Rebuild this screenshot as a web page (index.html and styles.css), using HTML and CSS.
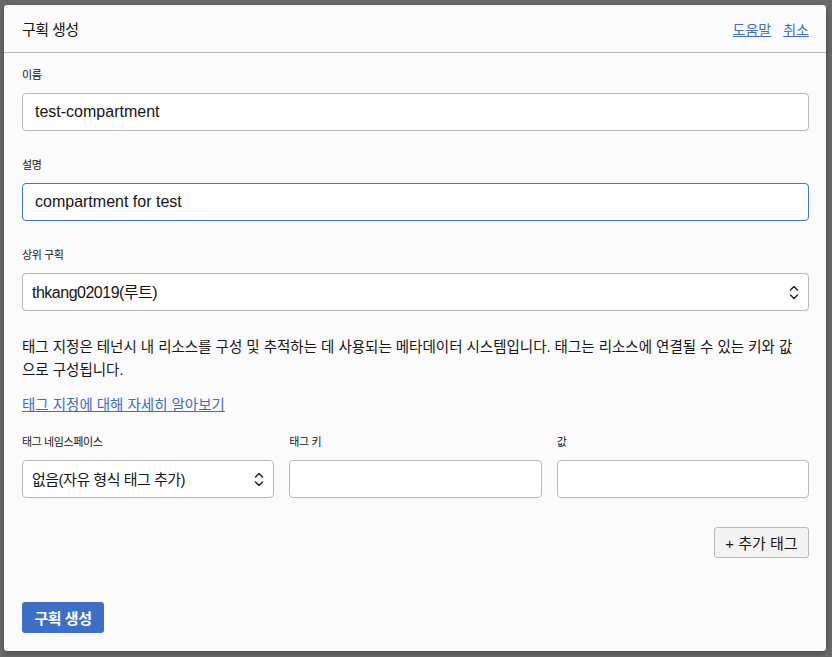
FILE: index.html
```html
<!DOCTYPE html>
<html lang="ko">
<head>
  <meta charset="UTF-8">
  <title>구획 생성</title>
  <link rel="stylesheet" href="styles.css">
</head>
<body>
  <div class="dialog">
    <div class="dialog-header">
      <h1>구획 생성</h1>
      <div class="header-links">
        <a href="#">도움말</a>
        <a href="#">취소</a>
      </div>
    </div>

    <div class="dialog-body">
      <div class="field">
        <label>이름</label>
        <input type="text" class="text-input" value="test-compartment">
      </div>

      <div class="field">
        <label>설명</label>
        <input type="text" class="text-input focused" value="compartment for test">
      </div>

      <div class="field">
        <label>상위 구획</label>
        <div class="select-wrap">
          <select class="text-input">
            <option>thkang02019(루트)</option>
          </select>
          <svg class="chevrons" width="10" height="17" viewBox="0 0 10 17"><path d="M1.5 6 L5 2.5 L8.5 6 M1.5 11 L5 14.5 L8.5 11" fill="none" stroke="#2b2b2b" stroke-width="1.6" stroke-linecap="round" stroke-linejoin="round"/></svg>
        </div>
      </div>

      <p class="tag-intro">태그 지정은 테넌시 내 리소스를 구성 및 추적하는 데 사용되는 메타데이터 시스템입니다. 태그는 리소스에 연결될 수 있는 키와 값 으로 구성됩니다.</p>
      <a href="#" class="learn-more">태그 지정에 대해 자세히 알아보기</a>

      <div class="tag-row">
        <div>
          <label>태그 네임스페이스</label>
          <div class="select-wrap">
            <select class="text-input">
              <option>없음(자유 형식 태그 추가)</option>
            </select>
            <svg class="chevrons" width="10" height="17" viewBox="0 0 10 17"><path d="M1.5 6 L5 2.5 L8.5 6 M1.5 11 L5 14.5 L8.5 11" fill="none" stroke="#2b2b2b" stroke-width="1.6" stroke-linecap="round" stroke-linejoin="round"/></svg>
          </div>
        </div>
        <div>
          <label>태그 키</label>
          <input type="text" class="text-input">
        </div>
        <div>
          <label>값</label>
          <input type="text" class="text-input">
        </div>
      </div>

      <div class="add-row">
        <button class="btn-secondary">+ 추가 태그</button>
      </div>

      <button class="btn-primary">구획 생성</button>
    </div>
  </div>
</body>
</html>
```

FILE: styles.css
```css
html, body {
  margin: 0;
  height: 100%;
}
body {
  background-color: #6a6a6a;
  font-family: "Liberation Sans", "Noto Sans CJK KR", sans-serif;
  color: #161513;
  padding: 5px 6px 0 4px;
  box-sizing: border-box;
  overflow: hidden;
}
.dialog {
  background-color: #fbfbfb;
  height: 646px;
  border-radius: 3px;
  box-shadow: 0 2px 6px rgba(0, 0, 0, 0.35);
}
.dialog-header {
  height: 47px;
  border-bottom: 1px solid #b6bbc3;
  display: flex;
  align-items: center;
  justify-content: space-between;
  padding: 0 17px 0 18px;
}
.dialog-header h1 {
  margin: 0;
  font-size: 15px;
  font-weight: normal;
  letter-spacing: -0.6px;
}
.header-links {
  display: flex;
  gap: 12px;
}
.header-links a {
  color: #3d72c6;
  font-size: 14px;
}
.dialog-body {
  padding: 14px 17px 0 18px;
}
label {
  display: block;
  font-size: 11px;
  line-height: 16px;
  letter-spacing: -0.4px;
  margin-bottom: 10px;
}
.field {
  margin-bottom: 26px;
}
.field:nth-child(3) {
  margin-bottom: 25px;
}
.text-input {
  display: block;
  width: 100%;
  height: 38px;
  box-sizing: border-box;
  border: 1px solid #b5b9c0;
  border-radius: 4px;
  background-color: #fff;
  padding: 0 12px;
  font-family: "Liberation Sans", "Noto Sans CJK KR", sans-serif;
  font-size: 16px;
  color: #161513;
  outline: none;
}
.text-input.focused {
  border-color: #3f74c8;
}
select.text-input {
  appearance: none;
  -webkit-appearance: none;
  padding: 0 30px 0 9px;
  letter-spacing: -0.5px;
}
.select-wrap {
  position: relative;
}
.chevrons {
  position: absolute;
  right: 10px;
  top: 11px;
  pointer-events: none;
}
.tag-intro {
  margin: 0;
  font-size: 14.5px;
  line-height: 22.5px;
}
.learn-more {
  display: inline-block;
  margin-top: 13px;
  color: #3c6fc3;
  font-size: 14.5px;
  line-height: 22px;
}
.tag-row {
  display: grid;
  grid-template-columns: repeat(3, 1fr);
  gap: 15px;
  margin-top: 18px;
}
.tag-row select.text-input {
  font-size: 15px;
}
.add-row {
  display: flex;
  justify-content: flex-end;
  margin-top: 29px;
}
.btn-secondary {
  height: 31px;
  width: 95px;
  background-color: #f3f3f3;
  border: 1px solid #b5b9c0;
  border-radius: 3px;
  font-family: "Liberation Sans", "Noto Sans CJK KR", sans-serif;
  font-size: 15px;
  color: #161513;
}
.btn-primary {
  display: block;
  margin-top: 44px;
  height: 31px;
  width: 82px;
  background-color: #3b70c6;
  border: none;
  border-radius: 3px;
  color: #fff;
  font-family: "Liberation Sans", "Noto Sans CJK KR", sans-serif;
  font-size: 15px;
  font-weight: bold;
  letter-spacing: -0.5px;
}
```
